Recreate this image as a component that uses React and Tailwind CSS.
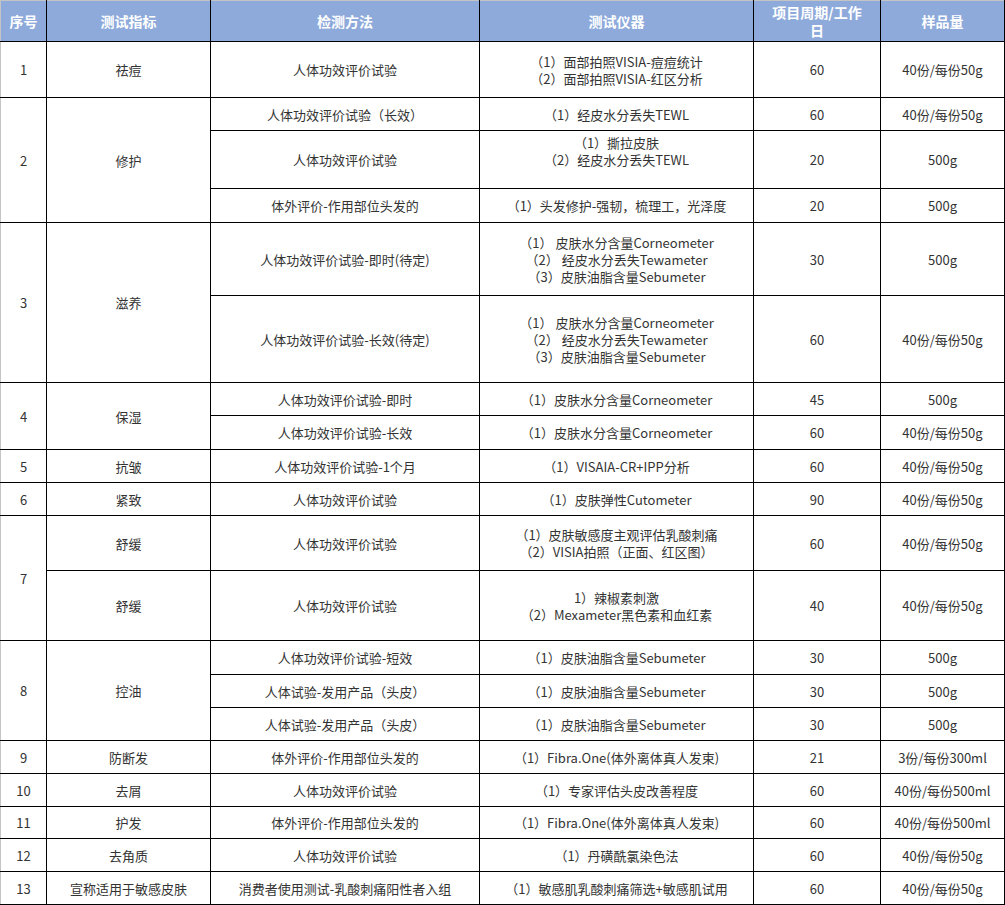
const rows = [
  { h: 56, no: "1", noSpan: 1, item: "祛痘", itemSpan: 1, method: "人体功效评价试验", tools: ["（1）面部拍照VISIA-痘痘统计", "（2）面部拍照VISIA-红区分析"], days: "60", qty: "40份/每份50g" },
  { h: 33, no: "2", noSpan: 3, item: "修护", itemSpan: 3, method: "人体功效评价试验（长效）", tools: ["（1）经皮水分丢失TEWL"], days: "60", qty: "40份/每份50g" },
  { h: 58, method: "人体功效评价试验", tools: ["（1）撕拉皮肤", "（2）经皮水分丢失TEWL", "\u00a0"], days: "20", qty: "500g" },
  { h: 34, method: "体外评价-作用部位头发的", tools: ["（1）头发修护-强韧，梳理工，光泽度"], days: "20", qty: "500g" },
  { h: 73, no: "3", noSpan: 2, item: "滋养", itemSpan: 2, method: "人体功效评价试验-即时(待定)", tools: ["（1） 皮肤水分含量Corneometer", "（2） 经皮水分丢失Tewameter", "（3）皮肤油脂含量Sebumeter"], days: "30", qty: "500g" },
  { h: 87, method: "人体功效评价试验-长效(待定)", tools: ["（1） 皮肤水分含量Corneometer", "（2） 经皮水分丢失Tewameter", "（3）皮肤油脂含量Sebumeter"], days: "60", qty: "40份/每份50g" },
  { h: 33, no: "4", noSpan: 2, item: "保湿", itemSpan: 2, method: "人体功效评价试验-即时", tools: ["（1）皮肤水分含量Corneometer"], days: "45", qty: "500g" },
  { h: 34, method: "人体功效评价试验-长效", tools: ["（1）皮肤水分含量Corneometer"], days: "60", qty: "40份/每份50g" },
  { h: 33, no: "5", noSpan: 1, item: "抗皱", itemSpan: 1, method: "人体功效评价试验-1个月", tools: ["（1）VISAIA-CR+IPP分析"], days: "60", qty: "40份/每份50g" },
  { h: 33, no: "6", noSpan: 1, item: "紧致", itemSpan: 1, method: "人体功效评价试验", tools: ["（1）皮肤弹性Cutometer"], days: "90", qty: "40份/每份50g" },
  { h: 55, no: "7", noSpan: 2, item: "舒缓", itemSpan: 1, method: "人体功效评价试验", tools: ["（1）皮肤敏感度主观评估乳酸刺痛", "（2）VISIA拍照（正面、红区图）"], days: "60", qty: "40份/每份50g" },
  { h: 70, item: "舒缓", itemSpan: 1, method: "人体功效评价试验", tools: ["1）辣椒素刺激", "（2）Mexameter黑色素和血红素"], days: "40", qty: "40份/每份50g" },
  { h: 34, no: "8", noSpan: 3, item: "控油", itemSpan: 3, method: "人体功效评价试验-短效", tools: ["（1）皮肤油脂含量Sebumeter"], days: "30", qty: "500g" },
  { h: 33, method: "人体试验-发用产品（头皮）", tools: ["（1）皮肤油脂含量Sebumeter"], days: "30", qty: "500g" },
  { h: 33, method: "人体试验-发用产品（头皮）", tools: ["（1）皮肤油脂含量Sebumeter"], days: "30", qty: "500g" },
  { h: 33, no: "9", noSpan: 1, item: "防断发", itemSpan: 1, method: "体外评价-作用部位头发的", tools: ["（1）Fibra.One(体外离体真人发束)"], days: "21", qty: "3份/每份300ml" },
  { h: 33, no: "10", noSpan: 1, item: "去屑", itemSpan: 1, method: "人体功效评价试验", tools: ["（1）专家评估头皮改善程度"], days: "60", qty: "40份/每份500ml" },
  { h: 32, no: "11", noSpan: 1, item: "护发", itemSpan: 1, method: "体外评价-作用部位头发的", tools: ["（1）Fibra.One(体外离体真人发束)"], days: "60", qty: "40份/每份500ml" },
  { h: 33, no: "12", noSpan: 1, item: "去角质", itemSpan: 1, method: "人体功效评价试验", tools: ["（1）丹磺酰氯染色法"], days: "60", qty: "40份/每份50g" },
  { h: 33, no: "13", noSpan: 1, item: "宣称适用于敏感皮肤", itemSpan: 1, method: "消费者使用测试-乳酸刺痛阳性者入组", tools: ["（1）敏感肌乳酸刺痛筛选+敏感肌试用"], days: "60", qty: "40份/每份50g" },
];

const th = "border border-black border-t-[#c4c4c4] bg-[#8eaadb] text-white font-bold text-[14px] leading-[18px] text-center align-middle px-1";
const td = "border border-black text-center align-middle px-1 text-[13px] leading-[17px] text-[#333]";

export default function App() {
  return (
    <div className="bg-white w-[1005px] h-[905px] overflow-hidden" style={{ fontFamily: '"Microsoft YaHei", "Noto Sans CJK SC", "Noto Sans", sans-serif' }}>
      <table className="border-collapse table-fixed w-[1004px]">
        <colgroup>
          <col className="w-[46px]" />
          <col className="w-[164px]" />
          <col className="w-[269px]" />
          <col className="w-[274px]" />
          <col className="w-[127px]" />
          <col className="w-[124px]" />
        </colgroup>
        <thead>
          <tr className="h-[41px]">
            <th className={th + " border-l-[#c4c4c4]"}>序号</th>
            <th className={th}>测试指标</th>
            <th className={th}>检测方法</th>
            <th className={th}>测试仪器</th>
            <th className={th}>项目周期/工作<br />日</th>
            <th className={th}>样品量</th>
          </tr>
        </thead>
        <tbody>
          {rows.map((r, i) => (
            <tr key={i} style={{ height: r.h }}>
              {r.no && (
                <td rowSpan={r.noSpan} className={td + " border-l-[#c4c4c4]"}>{r.no}</td>
              )}
              {r.item && (
                <td rowSpan={r.itemSpan} className={td}>{r.item}</td>
              )}
              <td className={td}>{r.method}</td>
              <td className={td}>
                {r.tools.map((t, j) => (
                  <div key={j} className="whitespace-pre">{t}</div>
                ))}
              </td>
              <td className={td}>{r.days}</td>
              <td className={td}>{r.qty}</td>
            </tr>
          ))}
        </tbody>
      </table>
    </div>
  );
}
